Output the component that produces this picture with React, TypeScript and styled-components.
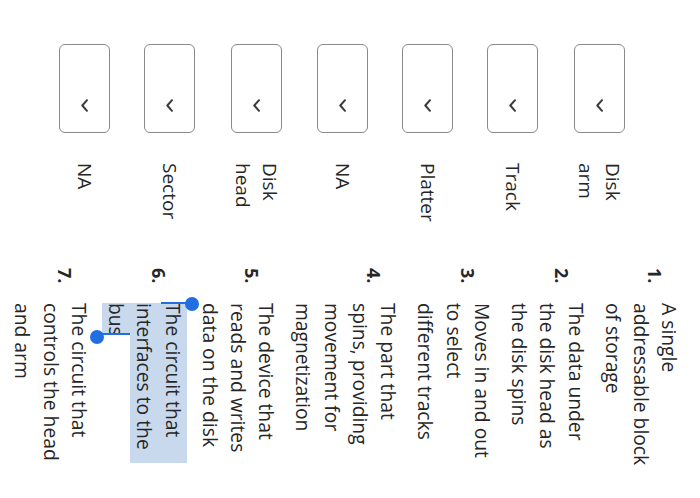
import React from "react";
import styled, { createGlobalStyle } from "styled-components";

const LINE = 28.4;

const GlobalStyle = createGlobalStyle`
  html, body {
    margin: 0;
    padding: 0;
    background: #ffffff;
  }

  body {
    font-family: "Open Sans", "Liberation Sans", sans-serif;
    color: #262626;
  }
`;

// the quiz is laid out sideways: lines run top to bottom, rows stack right to left
const Page = styled.main`
  width: 700px;
  height: 498px;
  overflow: hidden;
  writing-mode: vertical-rl;
  text-orientation: sideways;
  display: flex;
  gap: 41px;
`;

const MatchColumn = styled.div`
  display: flex;
  flex-direction: column;
  gap: 34px;
  padding-block-start: 74px;
  padding-inline-start: 44px;
`;

const MatchRow = styled.div`
  display: flex;
  align-items: center;
  gap: 30px;
`;

const SelectBox = styled.div`
  box-sizing: border-box;
  inline-size: 89px;
  block-size: 51px;
  border: 1.5px solid #8a8a8a;
  border-radius: 6px;
  display: flex;
  align-items: center;
  padding-inline-start: 54px;
  flex: none;
`;

const MatchLabel = styled.span`
  inline-size: 64px;
  font-size: 19px;
  line-height: 27px;
`;

const DefinitionList = styled.ol`
  list-style: none;
  margin: 0;
  padding: 0;
  padding-block-start: 16.7px;
  display: flex;
  flex-direction: column;
  gap: 8.4px;
`;

const DefinitionItem = styled.li`
  display: flex;
`;

const ItemNumber = styled.span`
  flex: none;
  inline-size: 35px;
  margin-block-start: 14px;
  font-size: 18px;
  font-weight: 700;
  line-height: ${LINE}px;
`;

const ItemText = styled.span`
  position: relative;
  isolation: isolate;
  inline-size: 163px;
  font-size: 19.3px;
  line-height: ${LINE}px;
`;

// text selection drawn behind the glyphs
const SelectionBand = styled.span<{ $from: number; $lines: number; $size: number }>`
  position: absolute;
  z-index: -1;
  inset-inline-start: 0;
  inset-block-start: ${(p) => p.$from * LINE}px;
  inline-size: ${(p) => p.$size}px;
  block-size: ${(p) => p.$lines * LINE}px;
  background: #c9d9ed;
`;

const HandleStem = styled.span<{ $inline: number; $block: number; $length: number }>`
  position: absolute;
  inset-inline-start: ${(p) => p.$inline}px;
  inset-block-start: ${(p) => p.$block}px;
  inline-size: 2px;
  block-size: ${(p) => p.$length}px;
  background: #1f6fe2;
`;

const HandleKnob = styled.span<{ $inline: number; $block: number }>`
  position: absolute;
  inset-inline-start: ${(p) => p.$inline}px;
  inset-block-start: ${(p) => p.$block}px;
  inline-size: 14px;
  block-size: 14px;
  border-radius: 50%;
  background: #1f6fe2;
`;

const Chevron = () => (
  <svg width="7" height="13" viewBox="0 0 7 13" fill="none">
    <path d="M6 1.2 L1.3 6.5 L6 11.8" stroke="#3b3b3b" strokeWidth="2" strokeLinecap="round" strokeLinejoin="round" />
  </svg>
);

const Selection = () => (
  <>
    <SelectionBand $from={0} $lines={2} $size={160} />
    <SelectionBand $from={2} $lines={1} $size={30} />
    <HandleStem $inline={-1} $block={0} $length={26} />
    <HandleKnob $inline={-6} $block={-12.4} />
    <HandleStem $inline={30} $block={2 * LINE} $length={28} />
    <HandleKnob $inline={26.5} $block={83} />
  </>
);

const matches = ["Disk arm", "Track", "Platter", "NA", "Disk head", "Sector", "NA"];

const definitions = [
  "A single addressable block of storage",
  "The data under the disk head as the disk spins",
  "Moves in and out to select different\u00a0tracks",
  "The part that spins, providing movement for magnetization",
  "The device that reads and writes data on the disk",
  "The circuit that interfaces to the bus",
  "The circuit that controls the head and arm",
];

export default function App() {
  return (
    <>
      <GlobalStyle />
      <Page>
        <MatchColumn>
          {matches.map((term, i) => (
            <MatchRow key={i}>
              <SelectBox>
                <Chevron />
              </SelectBox>
              <MatchLabel>{term}</MatchLabel>
            </MatchRow>
          ))}
        </MatchColumn>
        <DefinitionList>
          {definitions.map((text, i) => (
            <DefinitionItem key={i}>
              <ItemNumber>{i + 1}.</ItemNumber>
              <ItemText>
                {i === 5 && <Selection />}
                {text}
              </ItemText>
            </DefinitionItem>
          ))}
        </DefinitionList>
      </Page>
    </>
  );
}
